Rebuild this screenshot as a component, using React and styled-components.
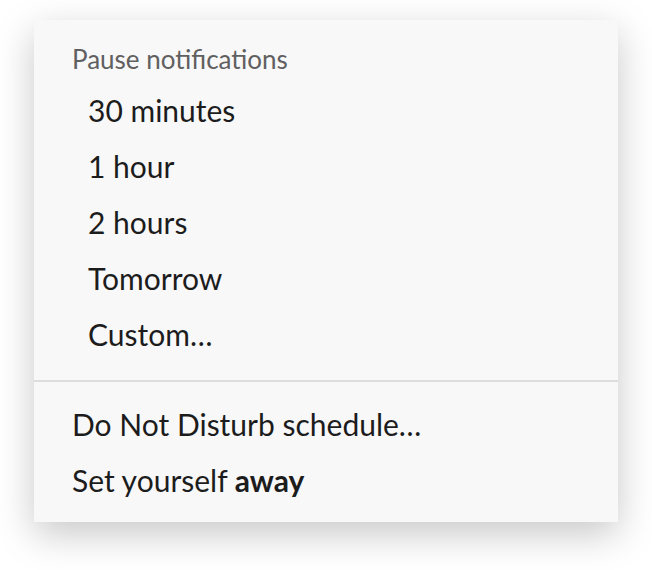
import React from 'react';
import styled, { createGlobalStyle } from 'styled-components';

const GlobalStyle = createGlobalStyle`
  * {
    box-sizing: border-box;
  }

  body {
    margin: 0;
    background: #fff;
    font-family: Lato, 'Liberation Sans', sans-serif;
  }
`;

const pauseOptions = [
  '30 minutes',
  '1 hour',
  '2 hours',
  'Tomorrow',
  'Custom…',
];

const Page = styled.main`
  padding: 20px 34px 48px;
`;

const Menu = styled.div`
  background: #f8f8f8;
  color: #1d1c1d;
  box-shadow: 0 12px 36px rgba(0, 0, 0, 0.22);
`;

const Section = styled.section`
  padding: ${({ $first }) => ($first ? '16px 0 18px' : '14px 0')};

  & + & {
    border-top: 2px solid #dddddd;
  }
`;

const SectionTitle = styled.h2`
  margin: 0;
  padding: 0 38px;
  font-size: 26px;
  font-weight: 400;
  line-height: 46px;
  color: #616061;
`;

const Item = styled.button`
  display: block;
  width: 100%;
  padding: 0 ${({ $indent }) => ($indent ? '54px' : '38px')};
  border: 0;
  background: transparent;
  color: inherit;
  font-family: inherit;
  font-size: 30px;
  line-height: 56px;
  text-align: left;
  cursor: pointer;
`;

const Status = styled.strong`
  font-weight: 700;
`;

const App = () => (
  <>
    <GlobalStyle />
    <Page>
      <Menu>
        <Section $first>
          <SectionTitle>Pause notifications</SectionTitle>
          {pauseOptions.map((label) => (
            <Item key={label} type="button" $indent>
              {label}
            </Item>
          ))}
        </Section>
        <Section>
          <Item type="button">Do Not Disturb schedule…</Item>
          <Item type="button">
            Set yourself <Status>away</Status>
          </Item>
        </Section>
      </Menu>
    </Page>
  </>
);

export default App;
